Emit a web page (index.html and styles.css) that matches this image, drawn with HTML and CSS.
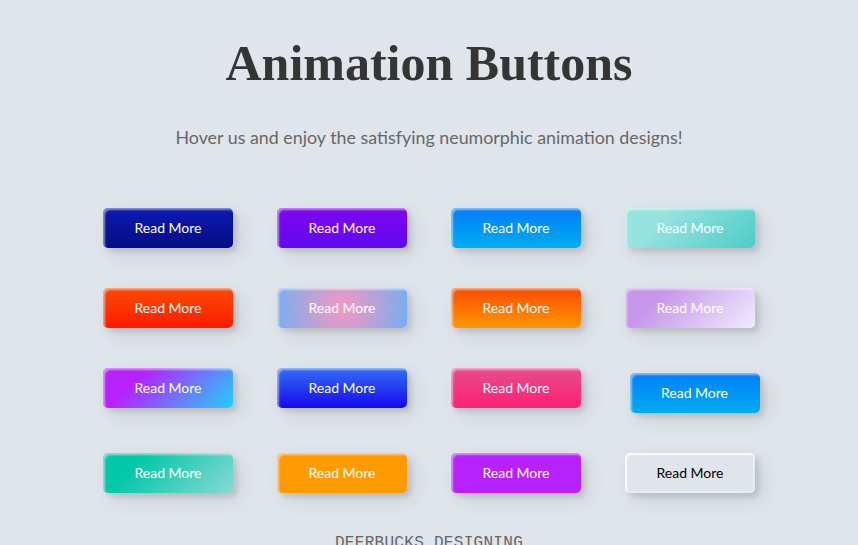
FILE: index.html
```html
<!DOCTYPE html>
<html lang="en">
<head>
<meta charset="utf-8">
<title>Animation Buttons</title>
<link rel="stylesheet" href="styles.css">
</head>
<body>
<h1 class="title">Animation Buttons</h1>
<p class="subtitle">Hover us and enjoy the satisfying neumorphic animation designs!</p>
<div class="frame">
  <button class="btn btn-1">Read More</button>
  <button class="btn btn-2">Read More</button>
  <button class="btn btn-3">Read More</button>
  <button class="btn btn-4">Read More</button>
  <button class="btn btn-5">Read More</button>
  <button class="btn btn-6">Read More</button>
  <button class="btn btn-7">Read More</button>
  <button class="btn btn-8">Read More</button>
  <button class="btn btn-9">Read More</button>
  <button class="btn btn-10">Read More</button>
  <button class="btn btn-11">Read More</button>
  <button class="btn btn-12">Read More</button>
  <button class="btn btn-13">Read More</button>
  <button class="btn btn-14">Read More</button>
  <button class="btn btn-15">Read More</button>
  <button class="btn btn-16">Read More</button>
</div>
<div class="footer">DEERBUCKS DESIGNING</div>
</body>
</html>
```
FILE: styles.css
```css
html, body {
  margin: 0;
  padding: 0;
}
body {
  background: #e0e5ec;
  overflow: hidden;
  height: 545px;
}
.title {
  margin: 0;
  padding-top: 34px;
  text-align: center;
  color: #353535;
  font-family: "Liberation Serif", "Times New Roman", serif;
  font-weight: bold;
  font-size: 50px;
  line-height: 58px;
}
.subtitle {
  margin: 34px 0 0;
  text-align: center;
  font-family: Lato, sans-serif;
  font-weight: 400;
  font-size: 17.85px;
  line-height: 22px;
  color: #676767;
}
.frame {
  width: 696px;
  margin: 60px auto 0;
  display: grid;
  grid-template-columns: repeat(4, 174px);
  row-gap: 40px;
  justify-items: center;
  align-items: start;
}
.btn {
  width: 130px;
  height: 40px;
  padding: 0 0 2px;
  border: none;
  border-radius: 5px;
  color: #fff;
  font-family: Lato, sans-serif;
  font-size: 14px;
  font-weight: 400;
  box-shadow: inset 2px 2px 2px 0 rgba(255,255,255,.5),
              7px 7px 20px 0 rgba(0,0,0,.1),
              4px 4px 5px 0 rgba(0,0,0,.1);
  cursor: pointer;
}
.btn-1 { background: linear-gradient(0deg, #060e83 0%, #0c19b4 100%); }
.btn-2 { background: linear-gradient(0deg, #6009f0 0%, #8105f0 100%); }
.btn-3 { background: linear-gradient(0deg, #00acee 0%, #027efb 100%); }
.btn-4 { background: linear-gradient(315deg, #4dccc6 0%, #96e4df 74%); }
.btn-5 { background: linear-gradient(0deg, #ff1b00 0%, #fb4b02 100%); }
.btn-6 { background: radial-gradient(circle, #f796c0 0%, #76aef1 100%); }
.btn-7 { background: linear-gradient(0deg, #ff9700 0%, #fb4b02 100%); }
.btn-8 { background: linear-gradient(315deg, #f0ecfc 0%, #c797eb 74%); }
.btn-9 { background: linear-gradient(315deg, #1fd1f9 0%, #b621fe 74%); }
.btn-10 { background: linear-gradient(0deg, #1609f0 0%, #316ef4 100%); }
.btn-11 { background: linear-gradient(0deg, #fb2175 0%, #ea4c89 100%); }
.btn-12 {
  background: linear-gradient(0deg, #00acee 0%, #027efb 100%);
  margin: 5px 0 0 9px;
}
.btn-13 { background: linear-gradient(315deg, #89d8d3 0%, #03c8a8 74%); }
.btn-14 { background: #ff9a00; }
.btn-15 { background: #b621fe; }
.btn-16 {
  background: #e0e5ec;
  color: #000;
  box-shadow: inset 2px 2px 2px 0 rgba(255,255,255,.7),
              inset 0 0 0 2px rgba(255,255,255,.3),
              7px 7px 20px 0 rgba(0,0,0,.1),
              4px 4px 5px 0 rgba(0,0,0,.1);
}
.footer {
  margin-top: 41px;
  text-align: center;
  font-family: "Liberation Mono", "DejaVu Sans Mono", monospace;
  font-size: 16px;
  letter-spacing: 0.3px;
  color: #666;
}
```
